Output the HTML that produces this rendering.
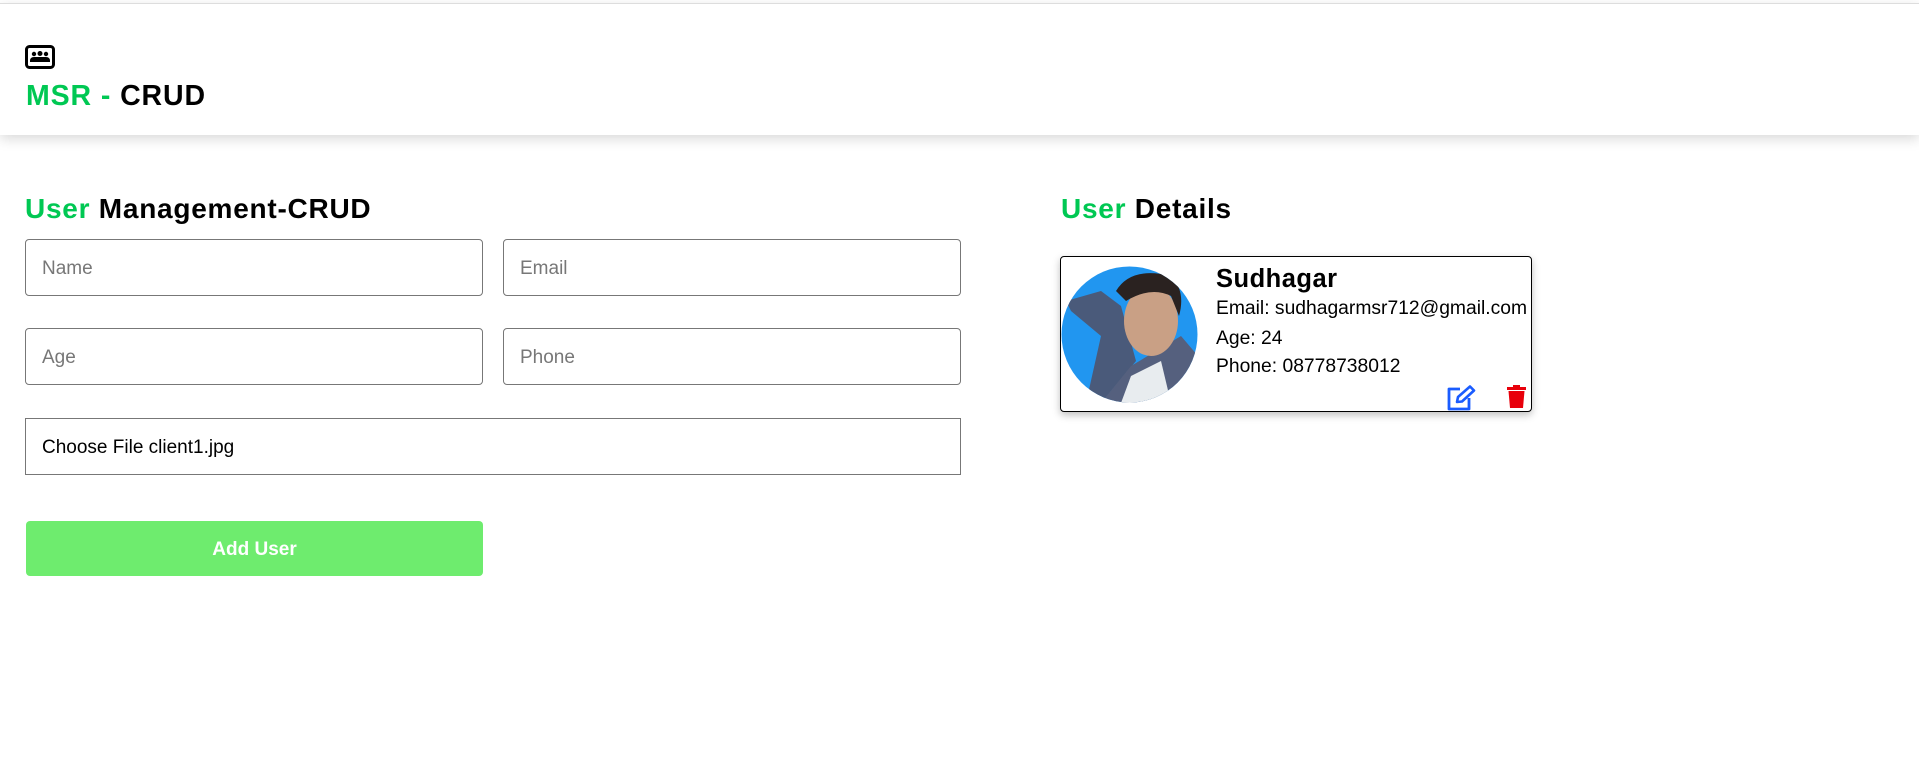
<!DOCTYPE html>
<html><head><meta charset="utf-8"><style>
*{box-sizing:border-box;margin:0;padding:0}
body{width:1919px;height:768px;background:#fff;font-family:"Liberation Sans",sans-serif;position:relative;overflow:hidden}
.hdr{position:absolute;left:0;top:3px;width:1919px;height:132px;background:#fff;border-top:1px solid #ddd;box-shadow:0 4px 12px rgba(0,0,0,.15)}
.abs{position:absolute;white-space:nowrap}
.g{color:#00c853}
h2{position:absolute;font-size:28px;font-weight:bold;line-height:1;white-space:nowrap;letter-spacing:.75px}
.in{position:absolute;border:1px solid #777;border-radius:4px;height:57px;font-size:19px;color:#777;padding-left:16px;line-height:57px}
.card{position:absolute;left:1060px;top:256px;width:472px;height:156px;border:1px solid #000;border-radius:4px;box-shadow:0 3px 8px rgba(0,0,0,.25);background:#fff}
.t{position:absolute;left:155px;font-size:19.3px;white-space:nowrap;line-height:1}
</style></head><body>
<div class="hdr"></div>
<svg class="abs" style="left:25px;top:45px" width="30" height="24" viewBox="0 0 30 24">
<rect x="1.5" y="1.5" width="27" height="21" rx="3" fill="none" stroke="#000" stroke-width="3"/>
<circle cx="9" cy="9" r="2.2"/><circle cx="15" cy="8.5" r="2.5"/><circle cx="21" cy="9" r="2.2"/>
<path d="M5 16 q0-4 4-4 h12 q4 0 4 4 v1 h-20z"/>
</svg>
<div class="abs" style="left:26px;top:80px;font-size:28.5px;font-weight:bold;letter-spacing:.9px"><span class="g">MSR - </span>CRUD</div>
<h2 style="left:25px;top:195px"><span class="g">User</span> Management-CRUD</h2>
<h2 style="left:1061px;top:195px"><span class="g">User</span> Details</h2>
<div class="in" style="left:25px;top:239px;width:458px">Name</div>
<div class="in" style="left:503px;top:239px;width:458px">Email</div>
<div class="in" style="left:25px;top:328px;width:458px">Age</div>
<div class="in" style="left:503px;top:328px;width:458px">Phone</div>
<div class="in" style="left:25px;top:418px;width:936px;border-radius:0;color:#000">Choose File client1.jpg</div>
<div class="abs" style="left:26px;top:521px;width:457px;height:55px;background:#6eec6e;border-radius:4px;color:#fff;font-weight:bold;font-size:19px;text-align:center;line-height:57px">Add User</div>
<div class="card">
<svg style="position:absolute;left:0;top:9px" width="137" height="137" viewBox="0 0 137 137">
<defs><clipPath id="c"><circle cx="68.5" cy="68.5" r="68"/></clipPath></defs>
<g clip-path="url(#c)">
<rect width="137" height="137" fill="#2196f0"/>
<path d="M5 35 L40 25 L60 40 L75 95 L40 137 L25 137 L40 70 L10 45z" fill="#4a5a7a"/>
<path d="M70 100 L120 70 L137 90 L137 137 L40 137z" fill="#55607e"/>
<path d="M70 110 L100 95 L110 137 L60 137z" fill="#e8ecef"/>
<ellipse cx="90" cy="55" rx="27" ry="35" fill="#c9a085"/>
<path d="M55 25 Q70 0 110 10 Q125 25 118 50 L110 30 Q90 20 65 35z" fill="#2a2220"/>
</g></svg>
<div class="t" style="top:10px;font-size:25.5px;font-weight:bold;letter-spacing:.5px">Sudhagar</div>
<div class="t" style="top:42px">Email: sudhagarmsr712@gmail.com</div>
<div class="t" style="top:72px">Age: 24</div>
<div class="t" style="top:100px">Phone: 08778738012</div>
<svg style="position:absolute;left:385px;top:128px" width="31" height="27" viewBox="0 0 31 27">
<path d="M14 4 H3 V24 H23 V13" fill="none" stroke="#1a5cff" stroke-width="2.8" stroke-linejoin="round"/>
<path d="M11 17 L12 12 L24 1.5 L28 5.5 L16 16.5z" fill="none" stroke="#1a5cff" stroke-width="2.6" stroke-linejoin="round"/>
</svg>
<svg style="position:absolute;left:446px;top:128px" width="19" height="24" viewBox="0 0 19 24">
<rect x="0" y="2" width="19" height="3" fill="#e8000b"/><rect x="6" y="0" width="7" height="3" fill="#e8000b"/>
<path d="M1.5 6 H17.5 L16 23 H3z" fill="#e8000b"/>
</svg>
</div>
</body></html>
